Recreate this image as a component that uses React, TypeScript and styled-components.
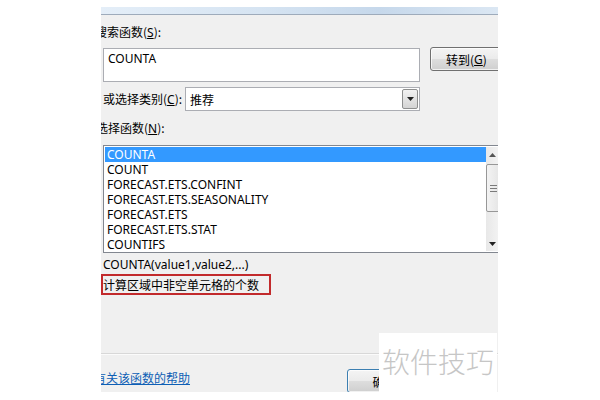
import React from "react";
import styled, {createGlobalStyle} from "styled-components";

const GlobalStyle = createGlobalStyle`
  html, body {
    margin: 0;
    padding: 0;
    background: #ffffff;
  }
  body {
    font-family: "Noto Sans", "Noto Sans CJK SC", sans-serif;
    font-size: 12px;
    color: #000;
  }
`;

const Page = styled.div`
  position: relative;
  width: 600px;
  height: 400px;
  overflow: hidden;
  background: #fff;
`;

const Dialog = styled.div`
  margin: 7px 0 0 101px;
  width: 397px;
  height: 385px;
  overflow: hidden;
  background: #f0f0f0;
  display: flex;
  flex-direction: column;
`;

const TitleStrip = styled.div`
  height: 7px;
  flex-shrink: 0;
  background: linear-gradient(to right, #e4eef8 0%, #d6e4f2 40%, #c6d8eb 70%, #dbe7f3 100%);
  border-bottom: 1px solid #9eabbb;
`;

const Label = styled.div<{ $shift: number; $top: number }>`
  margin-top: ${(p) => p.$top}px;
  margin-left: ${(p) => p.$shift}px;
  line-height: 16px;
  height: 16px;
  white-space: nowrap;
  font-family: "Noto Sans CJK SC", sans-serif;
`;

const Key = styled.span`
  text-decoration: underline;
  font-family: "Noto Sans", sans-serif;
`;

const SearchRow = styled.div`
  margin-top: 8px;
  display: flex;
  align-items: flex-start;
  height: 34px;
  padding-left: 2px;
`;

const SearchBox = styled.div`
  box-sizing: border-box;
  flex-shrink: 0;
  width: 317px;
  height: 34px;
  background: #fff;
  border: 1px solid #abadb3;
  padding: 2px 4px;
  line-height: 16px;
`;

const PushButton = styled.div<{ $width: number; $focus?: boolean }>`
  box-sizing: border-box;
  flex-shrink: 0;
  width: ${(p) => p.$width}px;
  height: 24px;
  border: 1px solid ${(p) => (p.$focus ? "#3c7fb1" : "#707070")};
  border-radius: 3px;
  background: linear-gradient(to bottom, #f4f4f4 0%, #ebebeb 48%, #dddddd 52%, #cfcfcf 100%);
  box-shadow: inset 0 0 0 1px rgba(255, 255, 255, 0.7);
  display: flex;
  align-items: center;
  justify-content: center;
  font-family: "Noto Sans CJK SC", sans-serif;
  white-space: nowrap;
`;

const GoButton = styled(PushButton)`
  margin-left: 10px;
  margin-top: -1px;
  justify-content: flex-start;
  padding-left: 15px;
`;

const CategoryRow = styled.div`
  margin-top: 5px;
  height: 24px;
  display: flex;
  align-items: center;
  padding-left: 2px;
`;

const CategoryLabel = styled.span`
  flex-shrink: 0;
  width: 82px;
  white-space: nowrap;
  font-family: "Noto Sans CJK SC", sans-serif;
`;

const Select = styled.div`
  box-sizing: border-box;
  flex-shrink: 0;
  width: 235px;
  height: 24px;
  background: #fff;
  border: 1px solid #abadb3;
  display: flex;
  align-items: center;
  padding: 1px 1px 1px 4px;
  font-family: "Noto Sans CJK SC", sans-serif;
`;

const SelectText = styled.span`
  flex: 1;
`;

const DropButton = styled.div`
  box-sizing: border-box;
  width: 16px;
  height: 20px;
  border: 1px solid #8e8f8f;
  border-radius: 2px;
  background: linear-gradient(to bottom, #f2f2f2, #d4d4d4);
  display: flex;
  align-items: center;
  justify-content: center;
`;

const List = styled.div`
  margin-top: 9px;
  margin-left: 2px;
  box-sizing: border-box;
  flex-shrink: 0;
  width: 412px;
  height: 108px;
  background: #fff;
  border: 1px solid #828790;
  display: flex;
  padding: 1px;
`;

const Rows = styled.div`
  flex: 0 0 381px;
`;

const Row = styled.div<{ $selected?: boolean }>`
  height: 15px;
  line-height: 15px;
  padding-left: 2px;
  white-space: nowrap;
  background: ${(p) => (p.$selected ? "#3399ff" : "transparent")};
  color: ${(p) => (p.$selected ? "#fff" : "#000")};
`;

const ScrollBar = styled.div`
  flex: 0 0 17px;
  display: flex;
  flex-direction: column;
  align-items: stretch;
  background: linear-gradient(to right, #e8e8e8, #f6f6f6);
`;

const ScrollArrow = styled.div`
  height: 15px;
  display: flex;
  align-items: center;
  justify-content: center;
  padding-right: 5px;
`;

const Thumb = styled.div`
  margin: 2px 0 0 0;
  height: 46px;
  border: 1px solid #979797;
  border-radius: 2px;
  background: linear-gradient(to right, #f3f3f3, #e2e2e2);
  display: flex;
  align-items: center;
  padding-left: 3px;
`;

const Track = styled.div`
  flex: 1;
`;

const Signature = styled.div`
  margin-top: 4px;
  margin-left: 2px;
  line-height: 16px;
  white-space: nowrap;
`;

const Description = styled.div`
  margin-top: 1px;
  box-sizing: border-box;
  width: 170px;
  height: 24px;
  border: 2px solid #c22a2c;
  display: flex;
  align-items: center;
  padding-left: 0;
  font-family: "Noto Sans CJK SC", sans-serif;
  white-space: nowrap;
`;

const Separator = styled.div`
  margin-top: 58px;
  height: 0;
  border-top: 1px solid #d8d8d8;
  border-bottom: 1px solid #fbfbfb;
`;

const Footer = styled.div`
  margin-top: 14px;
  display: flex;
  align-items: flex-start;
`;

const HelpLink = styled.span`
  flex-shrink: 0;
  margin-left: -7px;
  margin-top: 1px;
  width: 253px;
  color: #0e5fb5;
  text-decoration: underline;
  font-family: "Noto Sans CJK SC", sans-serif;
  line-height: 16px;
  white-space: nowrap;
`;

const Watermark = styled.div`
  position: absolute;
  left: 379px;
  top: 333px;
  width: 118px;
  height: 67px;
  background: #fff;
  color: #c6c6c6;
  font-family: "Noto Sans CJK SC", sans-serif;
  font-weight: 300;
  font-size: 28px;
  line-height: 56px;
  padding-left: 3px;
  box-sizing: border-box;
  white-space: nowrap;
`;

const functions = [
    "COUNTA",
    "COUNT",
    "FORECAST.ETS.CONFINT",
    "FORECAST.ETS.SEASONALITY",
    "FORECAST.ETS",
    "FORECAST.ETS.STAT",
    "COUNTIFS",
];

const Triangle = ({up}: { up?: boolean }) => (
    <svg width="7" height="4" viewBox="0 0 7 4">
        <path d={up ? "M0 4 L3.5 0 L7 4 Z" : "M0 0 L7 0 L3.5 4 Z"} fill={up ? "#555" : "#222"}/>
    </svg>
);

const Grip = () => (
    <svg width="7" height="7" viewBox="0 0 7 7">
        <path d="M0 0.5 H7 M0 3.5 H7 M0 6.5 H7" stroke="#7a7a7a" strokeWidth="1"/>
    </svg>
);

export default function App() {
    return (
        <Page>
            <GlobalStyle/>
            <Dialog>
                <TitleStrip/>
                <Label $shift={-6} $top={9}>
                    搜索函数(<Key>S</Key>):
                </Label>
                <SearchRow>
                    <SearchBox>COUNTA</SearchBox>
                    <GoButton $width={75}>
                        转到(<Key>G</Key>)
                    </GoButton>
                </SearchRow>
                <CategoryRow>
                    <CategoryLabel>
                        或选择类别(<Key>C</Key>):
                    </CategoryLabel>
                    <Select>
                        <SelectText>推荐</SelectText>
                        <DropButton>
                            <Triangle/>
                        </DropButton>
                    </Select>
                </CategoryRow>
                <Label $shift={-5} $top={9}>
                    选择函数(<Key>N</Key>):
                </Label>
                <List>
                    <Rows>
                        {functions.map((name, i) => (
                            <Row key={name} $selected={i === 0}>{name}</Row>
                        ))}
                    </Rows>
                    <ScrollBar>
                        <ScrollArrow><Triangle up/></ScrollArrow>
                        <Thumb><Grip/></Thumb>
                        <Track/>
                        <ScrollArrow><Triangle/></ScrollArrow>
                    </ScrollBar>
                </List>
                <Signature>COUNTA(value1,value2,...)</Signature>
                <Description>计算区域中非空单元格的个数</Description>
                <Separator/>
                <Footer>
                    <HelpLink>有关该函数的帮助</HelpLink>
                    <PushButton $width={75} $focus>确定</PushButton>
                </Footer>
            </Dialog>
            <Watermark>软件技巧</Watermark>
        </Page>
    );
}
